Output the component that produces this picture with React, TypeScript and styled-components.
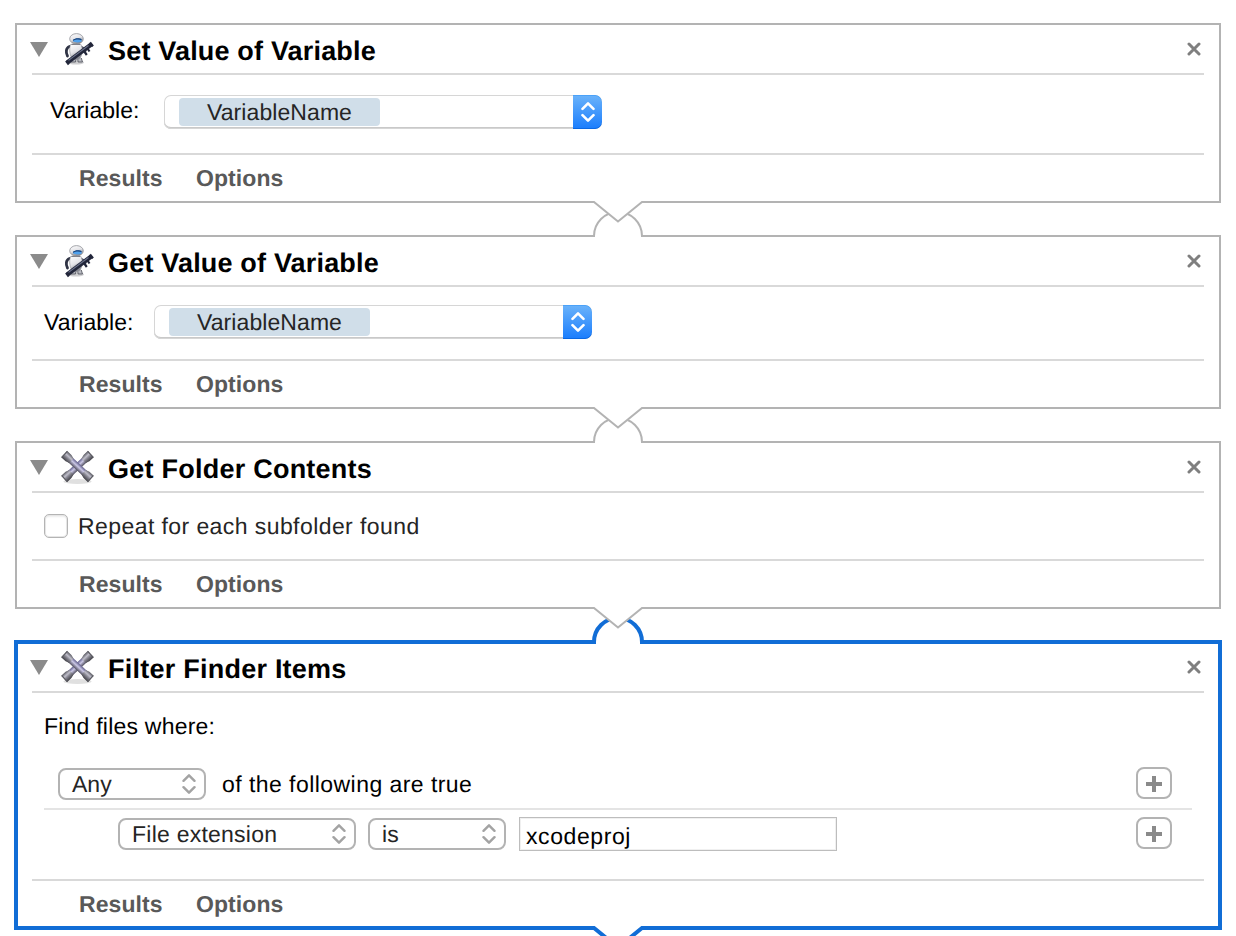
import React from "react";
import styled, { createGlobalStyle, css } from "styled-components";

const GlobalStyle = createGlobalStyle`
  * { box-sizing: border-box; }
  body {
    margin: 0;
    background: #fff;
    font-family: "Liberation Sans", Arial, sans-serif;
    font-size: 23px;
    color: #000;
    text-rendering: geometricPrecision;
  }
`;

const Workflow = styled.main`
  width: 1236px;
  height: 936px;
  overflow: hidden;
  padding: 23px 15px 0;
  display: flex;
  flex-direction: column;
  gap: 32px;
  background: #fff;
`;

const Panel = styled.section<{ $selected?: boolean }>`
  position: relative;
  flex: none;
  background: #fff;
  border: 2px solid #b3b3b3;
  ${(p) =>
    p.$selected &&
    css`
      border: 4px solid #116dd6;
      margin: -1px -1px 0;
    `}
`;

const PanelContent = styled.div<{ $selected?: boolean }>`
  display: flex;
  flex-direction: column;
  margin: ${(p) => (p.$selected ? "-1px" : "0")};
`;

const Header = styled.header`
  height: 48px;
  display: flex;
  align-items: center;
  padding: 0 18px 0 13px;
`;

const Triangle = styled.span`
  border: 9px solid transparent;
  border-top: 15px solid #8b8b8b;
  border-bottom: 0;
`;

const IconSlot = styled.span`
  width: 36px;
  height: 38px;
  margin-left: 11px;
  svg { display: block; }
`;

const Title = styled.h2<{ $track: number }>`
  margin: 3px 0 0 13px;
  flex: 1;
  font-size: 27px;
  line-height: 48px;
  font-weight: 700;
  letter-spacing: ${(p) => p.$track}px;
`;

const CloseButton = styled.button`
  display: flex;
  padding: 0;
  border: 0;
  background: none;
`;

const Divider = styled.div`
  height: 2px;
  margin: 0 15px;
  background: #d9d9d9;
`;

const Body = styled.div<{ $height: number; $top: number; $left?: number }>`
  height: ${(p) => p.$height}px;
  padding: ${(p) => p.$top}px 27px 0 ${(p) => p.$left ?? 27}px;
`;

const Footer = styled.footer`
  height: 46px;
  display: flex;
  padding-left: 62px;
  color: #595959;
  font-weight: 700;
  line-height: 46px;
  letter-spacing: 0.08px;
`;

const FooterTab = styled.span`
  width: 117px;
`;

const Row = styled.div`
  display: flex;
  align-items: flex-start;
`;

const Text = styled.span<{ $track: number; $line?: number; $soft?: boolean }>`
  line-height: ${(p) => p.$line ?? 32}px;
  letter-spacing: ${(p) => p.$track}px;
  color: ${(p) => (p.$soft ? "#252525" : "#000")};
  white-space: nowrap;
`;

const VariableLabel = styled(Text)<{ $width: number }>`
  width: ${(p) => p.$width}px;
  flex: none;
`;

const ComboBox = styled.div`
  width: 438px;
  height: 34px;
  display: flex;
  justify-content: space-between;
  border-radius: 7px;
  background: #fff;
  box-shadow: inset 0 0 0 1px #d6d6d6, inset 0 -2px 0 #c9c9c9;
  overflow: hidden;
`;

const Token = styled.span`
  width: 201px;
  height: 28px;
  margin: 3px 0 0 15px;
  padding-left: 28px;
  border-radius: 4px;
  background: #d0dee9;
  color: #252525;
  line-height: 28px;
  letter-spacing: 0.08px;
`;

const ComboArrow = styled.span`
  width: 29px;
  background: linear-gradient(#6bb3fa, #1a7dfd);
  border-radius: 0 7px 7px 0;
  box-shadow: inset 0 1px 0 #4ba2f8, inset 0 -1px 0 #0b69e3;
  display: flex;
  align-items: center;
  justify-content: center;
`;

const CheckBox = styled.span`
  width: 24px;
  height: 24px;
  margin-top: 4px;
  border: 1px solid #b4b4b4;
  border-radius: 5px;
  background: #fff;
  box-shadow: inset 0 0 0 1px #e6e6e6, inset 0 2px 2px #ececec;
`;

const CheckLabel = styled(Text)`
  margin-left: 10px;
`;

const RuleRow = styled.div<{ $indent: number }>`
  height: 32px;
  display: flex;
  align-items: flex-start;
  margin-left: ${(p) => p.$indent}px;
  padding-right: 20px;
`;

const Popup = styled.div<{ $width: number }>`
  width: ${(p) => p.$width}px;
  height: 32px;
  flex: none;
  display: flex;
  justify-content: space-between;
  align-items: center;
  padding: 0 8px 0 12px;
  border: 2px solid #b3b3b3;
  border-radius: 8px;
`;

const RuleText = styled(Text)`
  margin-left: 16px;
`;

const RuleDivider = styled.div`
  height: 2px;
  margin: 8px 0;
  background: #e4e4e4;
`;

const PopupGap = styled.span`
  width: 12px;
`;

const ValueField = styled.div`
  width: 318px;
  height: 34px;
  margin: -1px 0 0 13px;
  padding-left: 6px;
  border: 1px solid #bdbdbd;
  box-shadow: inset 0 0 0 1px #f0f0f0;
  line-height: 37px;
  letter-spacing: 0.58px;
`;

const AddButton = styled.button`
  width: 36px;
  height: 32px;
  margin: -1px 0 0 auto;
  padding: 2px 0 0;
  display: flex;
  align-items: center;
  justify-content: center;
  border: 2px solid #b3b3b3;
  border-radius: 8px;
  background: #fff;
`;

/* The plug and the socket lie over the panel edges that they interrupt. */
const Plug = styled.svg<{ $selected?: boolean }>`
  position: absolute;
  left: 50%;
  bottom: ${(p) => (p.$selected ? -28 : -26)}px;
  margin-left: -30px;
  z-index: 2;
`;

const Socket = styled.svg<{ $selected?: boolean }>`
  position: absolute;
  left: 50%;
  top: ${(p) => (p.$selected ? -31 : -30)}px;
  margin-left: -30px;
  z-index: 1;
`;

const FindPrompt = styled(Text)`
  display: block;
  margin-bottom: 26px;
`;

function PlugShape({ selected }: { selected?: boolean }) {
  return (
    <Plug $selected={selected} width="60" height="28" viewBox="0 0 60 28">
      <path d={selected ? "M6 0H54V3L30 23 6 3Z" : "M6 0H54V4L30 23 6 4Z"} fill="#fff" />
      <path
        d={selected ? "M4 2H6L30 21.500 54 2H56" : "M5 3H6L30 22.500 54 3H55"}
        fill="none"
        stroke={selected ? "#116dd6" : "#b3b3b3"}
        strokeWidth={selected ? 4 : 2}
      />
    </Plug>
  );
}

function SocketShape({ selected }: { selected?: boolean }) {
  return (
    <Socket $selected={selected} width="60" height="34" viewBox="0 0 60 34">
      <path d="M6 31V29a24 24 0 0 1 48 0v2Z" fill="#fff" />
      <path
        d={selected ? "M6 31V29a24 24 0 0 1 48 0v2" : "M6 30V29a24 24 0 0 1 48 0v1"}
        fill="none"
        stroke={selected ? "#116dd6" : "#b3b3b3"}
        strokeWidth={selected ? 4 : 2}
      />
    </Socket>
  );
}

function RobotIcon() {
  return (
    <svg width="36" height="38" viewBox="0 0 36 38">
      <defs>
        <linearGradient id="shell" x1="0" y1="0" x2="0.4" y2="1">
          <stop offset="0" stopColor="#fff" />
          <stop offset="0.55" stopColor="#e4e4e8" />
          <stop offset="1" stopColor="#85878f" />
        </linearGradient>
      </defs>
      <ellipse cx="17" cy="32.500" rx="8" ry="2" fill="#cfcfd1" />
      <path d="M12.500 28l-1.500 4h5.500l.8-4M18.500 28l.6 4h4.400l-1.200-4" fill="#b9bbc2" stroke="#4a4c55" strokeWidth=".8" />
      <path d="M10.500 16.500C6.800 18 6.600 22.500 8.500 26" fill="none" stroke="#2f3344" strokeWidth="2.800" strokeLinecap="round" />
      <path d="M21 16.500c2.500.5 4.500 2 5.500 4.500" fill="none" stroke="#555969" strokeWidth="2.200" strokeLinecap="round" />
      <path d="M11.500 14.500h10.500c1.700 4 1.800 8.500-.6 13.300-2 2.400-6.800 2.400-9 0-1.900-4.800-2.300-8.800-.9-13.300Z" fill="url(#shell)" stroke="#8f9198" strokeWidth=".6" />
      <path d="M12.500 14.300h8.500" stroke="#6e7078" strokeWidth="1" />
      <ellipse cx="17.500" cy="8.800" rx="6.800" ry="5.200" fill="url(#shell)" stroke="#909298" strokeWidth=".8" />
      <path d="M14 9.800c2-1.900 6.800-2.100 8.600-.5v2.200c-2.600 1.200-6 1.200-8.600.1Z" fill="#4fa2ee" />
      <path d="M14 9.800c2-1.900 6.800-2.100 8.600-.5v.9c-2.600-1.300-6-1-8.600.5Z" fill="#1c3f73" />
      <path d="M8.500 32.200L32.500 14.300" stroke="#22263a" strokeWidth="4.400" />
      <path d="M9.500 30.400L29.500 15.500" stroke="#6d748c" strokeWidth="1.100" />
      <path d="M7 30.800l2.800 3.700M31 12.500l3 3.800M25 21l2.800 4M28.500 18.500l2 3" stroke="#22263a" strokeWidth="2.200" />
    </svg>
  );
}

function BonesIcon() {
  return (
    <svg width="36" height="38" viewBox="0 0 36 38">
      <defs>
        <linearGradient id="metal" x1="0" y1="0" x2="0" y2="1">
          <stop offset="0" stopColor="#5a5a62" />
          <stop offset="0.35" stopColor="#c0bfcb" />
          <stop offset="0.6" stopColor="#85848f" />
          <stop offset="1" stopColor="#404046" />
        </linearGradient>
        <linearGradient id="shaft" x1="0" y1="0" x2="0" y2="1">
          <stop offset="0" stopColor="#625f8c" />
          <stop offset="0.45" stopColor="#cbc8e6" />
          <stop offset="1" stopColor="#504e5e" />
        </linearGradient>
      </defs>
      <ellipse cx="18.500" cy="33.500" rx="14" ry="2.400" fill="#e0e0e0" />
      {[-43, 43].map((angle) => (
        <g key={angle} transform={`translate(18.500 18.500) rotate(${angle})`}>
          <rect x="-12" y="-3.200" width="24" height="6.400" fill="url(#shaft)" />
          <path d="M-18.300-4.300h6l4 1.200v6.200l-4 1.200h-6ZM18.300-4.300h-6l-4 1.200v6.200l4 1.200h6Z" fill="url(#metal)" />
          <path d="M-17.800-4v8M17.800-4v8" stroke="#5c5c62" strokeWidth="1.200" />
        </g>
      ))}
    </svg>
  );
}

function Chevrons({ bold }: { bold?: boolean }) {
  return (
    <svg width="14" height="22" viewBox="0 0 14 22" fill="none" stroke={bold ? "#fff" : "#a3a3a3"} strokeWidth={bold ? 2.6 : 2.4}>
      <path d="M1.500 7.800L7 2.300 12.500 7.800M1.500 14.200L7 19.700 12.500 14.200" strokeLinejoin="round" strokeLinecap="round" />
    </svg>
  );
}

function PlusIcon() {
  return (
    <svg width="16" height="16" viewBox="0 0 16 16">
      <path d="M6 0h4v6h6v4h-6v6H6v-6H0V6h6Z" fill="#8a8a8a" />
    </svg>
  );
}

interface ActionProps {
  title: string;
  track: number;
  icon: React.ReactNode;
  selected?: boolean;
  first?: boolean;
  children: React.ReactNode;
}

function Action({ title, track, icon, selected, first, children }: ActionProps) {
  return (
    <Panel $selected={selected}>
      {!first && <SocketShape selected={selected} />}
      <PanelContent $selected={selected}>
        <Header>
          <Triangle />
          <IconSlot>{icon}</IconSlot>
          <Title $track={track}>{title}</Title>
          <CloseButton aria-label="Remove action">
            <svg width="14" height="14" viewBox="0 0 14 14">
              <path d="M2 2l10 10M12 2L2 12" stroke="#7f7f7f" strokeWidth="3" strokeLinecap="round" />
            </svg>
          </CloseButton>
        </Header>
        <Divider />
        {children}
        <Divider />
        <Footer>
          <FooterTab>Results</FooterTab>
          <FooterTab>Options</FooterTab>
        </Footer>
      </PanelContent>
      <PlugShape selected={selected} />
    </Panel>
  );
}

function VariableCombo() {
  return (
    <ComboBox>
      <Token>VariableName</Token>
      <ComboArrow>
        <Chevrons bold />
      </ComboArrow>
    </ComboBox>
  );
}

export default function App() {
  return (
    <>
      <GlobalStyle />
      <Workflow>
        <Action first title="Set Value of Variable" track={0.18} icon={<RobotIcon />}>
          <Body $height={78} $top={20} $left={33}>
            <Row>
              <VariableLabel $width={114} $track={0.05} $line={30}>Variable:</VariableLabel>
              <VariableCombo />
            </Row>
          </Body>
        </Action>
        <Action title="Get Value of Variable" track={0.18} icon={<RobotIcon />}>
          <Body $height={72} $top={18}>
            <Row>
              <VariableLabel $width={110} $track={0.05} $line={34}>Variable:</VariableLabel>
              <VariableCombo />
            </Row>
          </Body>
        </Action>
        <Action title="Get Folder Contents" track={0.24} icon={<BonesIcon />}>
          <Body $height={66} $top={17}>
            <Row>
              <CheckBox />
              <CheckLabel $track={0.42} $line={32} $soft>Repeat for each subfolder found</CheckLabel>
            </Row>
          </Body>
        </Action>
        <Action selected title="Filter Finder Items" track={0.24} icon={<BonesIcon />}>
          <Body $height={186} $top={17}>
            <FindPrompt $track={0.22}>Find files where:</FindPrompt>
            <RuleRow $indent={14}>
              <Popup $width={148}>
                <Text $track={0} $line={28} $soft>Any</Text>
                <Chevrons />
              </Popup>
              <RuleText $track={0.45} $line={32}>of the following are true</RuleText>
              <AddButton aria-label="Add rule">
                <PlusIcon />
              </AddButton>
            </RuleRow>
            <RuleDivider />
            <RuleRow $indent={74}>
              <Popup $width={238}>
                <Text $track={0.24} $line={28} $soft>File extension</Text>
                <Chevrons />
              </Popup>
              <PopupGap />
              <Popup $width={138}>
                <Text $track={0.24} $line={28} $soft>is</Text>
                <Chevrons />
              </Popup>
              <ValueField>xcodeproj</ValueField>
              <AddButton aria-label="Add rule">
                <PlusIcon />
              </AddButton>
            </RuleRow>
          </Body>
        </Action>
      </Workflow>
    </>
  );
}
